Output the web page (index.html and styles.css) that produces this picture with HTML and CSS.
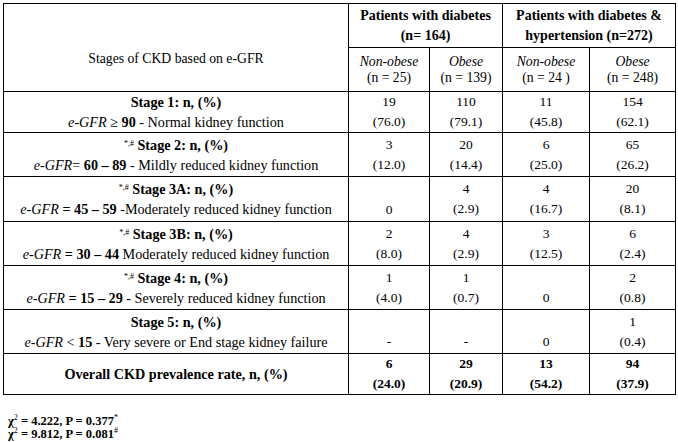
FILE: index.html
```html
<!DOCTYPE html>
<html>
<head>
<meta charset="utf-8">
<link rel="stylesheet" href="styles.css">
</head>
<body>
<div class="page">
<table class="ckd">
  <colgroup>
    <col class="c1"><col class="c2"><col class="c3"><col class="c4"><col class="c5">
  </colgroup>
  <tr class="h1">
    <td rowspan="2" class="stages-head">Stages of CKD based on e-GFR</td>
    <td colspan="2" class="grp">Patients with diabetes<br>(n= 164)</td>
    <td colspan="2" class="grp">Patients with diabetes &amp;<br>hypertension (n=272)</td>
  </tr>
  <tr class="h2">
    <td class="sub"><i>Non-obese</i><br>(n = 25)</td>
    <td class="sub"><i>Obese</i><br>(n = 139)</td>
    <td class="sub"><i>Non-obese</i><br>(n = 24 )</td>
    <td class="sub"><i>Obese</i><br>(n = 248)</td>
  </tr>
  <tr class="r1">
    <td class="stage"><b>Stage 1: n, (%)</b><br><i>e-GFR</i> ≥ <b>90</b> - Normal kidney function</td>
    <td>19<br>(76.0)</td><td>110<br>(79.1)</td><td>11<br>(45.8)</td><td>154<br>(62.1)</td>
  </tr>
  <tr class="r2">
    <td class="stage"><sup>*,#</sup> <b>Stage 2: n, (%)</b><br><i>e-GFR</i>= <b>60 – 89</b> - Mildly reduced kidney function</td>
    <td>3<br>(12.0)</td><td>20<br>(14.4)</td><td>6<br>(25.0)</td><td>65<br>(26.2)</td>
  </tr>
  <tr class="r3">
    <td class="stage"><sup>*,#</sup> <b>Stage 3A: n, (%)</b><br><i>e-GFR</i> <b>= 45 – 59</b> -Moderately reduced kidney function</td>
    <td class="low">0</td><td>4<br>(2.9)</td><td>4<br>(16.7)</td><td>20<br>(8.1)</td>
  </tr>
  <tr class="r4">
    <td class="stage"><sup>*,#</sup> <b>Stage 3B: n, (%)</b><br><i>e-GFR</i> <b>= 30 – 44</b> Moderately reduced kidney function</td>
    <td>2<br>(8.0)</td><td>4<br>(2.9)</td><td>3<br>(12.5)</td><td>6<br>(2.4)</td>
  </tr>
  <tr class="r5">
    <td class="stage"><sup>*,#</sup> <b>Stage 4: n, (%)</b><br><i>e-GFR</i> <b>= 15 – 29</b> - Severely reduced kidney function</td>
    <td>1<br>(4.0)</td><td>1<br>(0.7)</td><td class="low">0</td><td>2<br>(0.8)</td>
  </tr>
  <tr class="r6">
    <td class="stage"><b>Stage 5: n, (%)</b><br><i>e-GFR</i> &lt; <b>15</b> - Very severe or End stage kidney failure</td>
    <td class="low">-</td><td class="low">-</td><td class="low">0</td><td>1<br>(0.4)</td>
  </tr>
  <tr class="r7 total">
    <td class="stage">Overall CKD prevalence rate, n, (%)</td>
    <td>6<br>(24.0)</td><td>29<br>(20.9)</td><td>13<br>(54.2)</td><td>94<br>(37.9)</td>
  </tr>
</table>
<div class="notes">
  <div>χ<sup>2</sup> = 4.222, P = 0.377<sup>*</sup></div>
  <div>χ<sup>2</sup> = 9.812, P = 0.081<sup>#</sup></div>
</div>
</div>
</body>
</html>
```
FILE: styles.css
```css
html, body {
  margin: 0;
  padding: 0;
  background: #fff;
}
body {
  font-family: "Liberation Serif", "Times New Roman", serif;
  font-size: 13px;
  color: #000;
}
.page {
  padding: 3px 0 0 3px;
}
.ckd {
  border-collapse: collapse;
  table-layout: fixed;
  width: 672px;
}
.c1 { width: 345px; }
.c2 { width: 81px; }
.c3 { width: 73px; }
.c4 { width: 87px; }
.c5 { width: 86px; }
.ckd td {
  border: 1px solid #000;
  padding: 0 2px;
  text-align: center;
  vertical-align: middle;
  line-height: 20px;
  font-size: 13.5px;
}
.h1 { height: 44px; }
.h2 { height: 44px; }
.r1 { height: 41px; }
.r2 { height: 44px; }
.r3 { height: 45px; }
.r4 { height: 44px; }
.r5 { height: 44px; }
.r6 { height: 44px; }
.r7 { height: 41px; }
.ckd td.stages-head {
  padding-top: 22px;
  font-size: 13.7px;
}
.ckd td.grp {
  font-weight: bold;
  font-size: 14px;
}
.ckd td.sub {
  line-height: 16px;
  font-size: 13.7px;
}
.ckd td.stage {
  font-size: 14.2px;
  padding: 0;
}
.ckd td.low {
  vertical-align: bottom;
  padding-bottom: 1px;
}
.stage sup {
  font-size: 8px;
  line-height: 0;
  vertical-align: 4px;
  font-weight: normal;
}
.total td {
  font-weight: bold;
}
.notes {
  margin-top: 20px;
  padding-left: 5px;
  font-size: 12.5px;
  font-weight: bold;
  line-height: 13px;
}
.notes sup {
  font-size: 8px;
  line-height: 0;
  vertical-align: 5px;
  font-weight: normal;
}
```
